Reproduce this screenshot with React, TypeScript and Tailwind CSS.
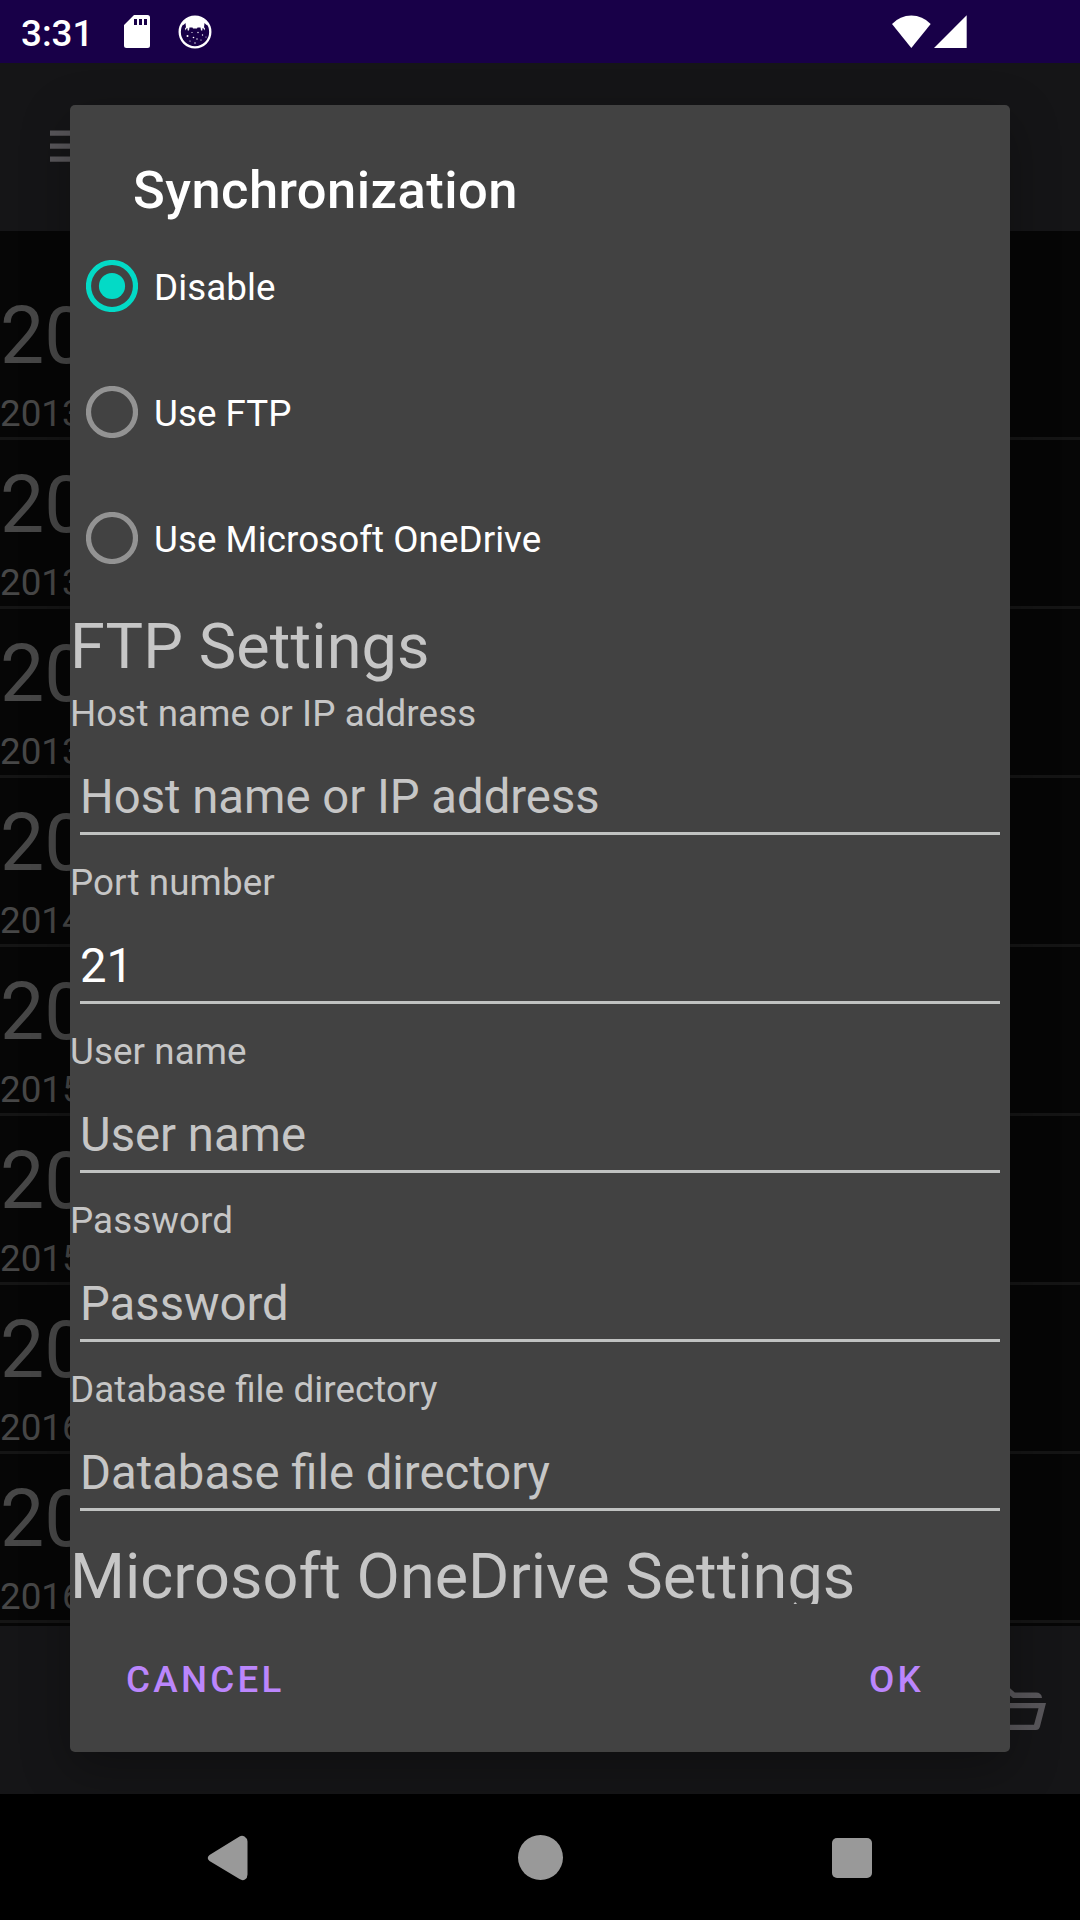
import React from "react";

const entries = ["2013", "2013", "2013", "2014", "2015", "2015", "2016", "2016"];

const fields = [
  { label: "Host name or IP address", value: "" },
  { label: "Port number", value: "21" },
  { label: "User name", value: "" },
  { label: "Password", value: "" },
  { label: "Database file directory", value: "" },
];

function StatusBar() {
  return (
    <div className="flex h-[63px] shrink-0 items-center bg-[#180048] text-white">
      <span className="ml-[21px] w-[103px] pt-[4px] text-[36.75px] leading-[44px] font-medium">3:31</span>
      <svg className="h-[33px] w-[26px]" viewBox="0 0 26 33" fill="white">
        <path
          fillRule="evenodd"
          d="M10 0H23.500Q26 0 26 2.500V30.500Q26 33 23.500 33H2.500Q0 33 0 30.500V10ZM10 4V10H13V4ZM15 4V10H18V4ZM20 4V10H23V4Z"
        />
      </svg>
      <svg className="ml-[28px] h-[34px] w-[34px]" viewBox="0 0 34 34">
        <circle cx="17" cy="17" r="15.300" fill="none" stroke="white" strokeWidth="2.300" />
        <path
          fill="white"
          d="M4 9Q9 1.500 17 1.500T30 9L28.500 10L26.500 8L26 12.500L27 13L26.500 15.500L25.500 13.500L24.500 13L24.300 15.500H23L22.500 12.500H19.500L19 13.500H15L14.500 12.500H11.500L11 15.500H9.700L9.500 13L8.500 13.500L7.500 15.500L7 13L8 12.500L7.500 8L5.500 10Z"
        />
        <g fill="white">
          <circle cx="9.500" cy="21" r="1" />
          <circle cx="14" cy="17.500" r=".6" />
          <circle cx="15.500" cy="22.500" r=".8" />
          <circle cx="20" cy="17.500" r=".7" />
          <circle cx="24.500" cy="20" r=".7" />
          <circle cx="19" cy="24" r=".7" />
          <circle cx="12" cy="26" r=".6" />
          <circle cx="23" cy="25" r=".6" />
          <circle cx="28" cy="22" r=".5" />
          <circle cx="17" cy="28" r=".7" />
        </g>
      </svg>
      <svg className="ml-auto mr-[113px] h-[34px] w-[76px]" viewBox="0 0 76 34" fill="white">
        <path d="M1 9Q9 .5 20.300 .5T39.700 9L20.300 33Z" />
        <path d="M43 33L75.700 .2V33Z" />
      </svg>
    </div>
  );
}

function Background() {
  return (
    <>
      <div className="flex h-[168px] shrink-0 items-start bg-[#151517]">
        <svg className="mt-[67px] ml-[50px] h-[33px] w-[20px]" viewBox="0 0 20 33" fill="#59575b">
          <rect y="0.500" width="20" height="5.250" />
          <rect y="13.500" width="20" height="5.250" />
          <rect y="26.500" width="20" height="5.250" />
        </svg>
      </div>
      <div className="h-[1395px] shrink-0 bg-[#060606] pt-[40px] text-[#474747]">
        {entries.map((year, i) => (
          <div key={i} className="h-[169px] border-b-[3px] border-[#151515]">
            <div className="h-[121px] pt-[19px] text-[78.75px] leading-[92px]">20</div>
            <div className="h-[43px] text-[36.75px] leading-[43px]">{year}</div>
          </div>
        ))}
      </div>
      <div className="flex h-[168px] shrink-0 justify-end bg-[#151517]">
        <svg className="mt-[60px] mr-[34px] h-[45px] w-[58px]" viewBox="0 0 58 45">
          <path
            fill="#59575b"
            fillRule="evenodd"
            d="M0 5Q0 0 5 0H19.500L26.800 6.500H48Q53.500 6.500 54 12H25L17 5.500H5V39L11.500 17H58L52 40.500Q51 44 48 44H5Q0 44 0 39ZM15.500 22.300L10.500 38.700H46L50.500 22.300Z"
          />
        </svg>
      </div>
    </>
  );
}

function NavBar() {
  return (
    <div className="flex h-[126px] shrink-0 items-center bg-black pt-px">
      <svg className="ml-[207px] h-[46px] w-[42px]" viewBox="0 0 42 46">
        <path
          fill="#999"
          d="M2.500 20L32.500 1.500Q35 0 37.500 1.500T40.500 6.500V39.500Q40.500 43 38 44.500T32.500 44L2.500 26Q-1 23 2.500 20Z"
        />
      </svg>
      <div className="ml-[269px] h-[45px] w-[45px] rounded-full bg-[#999]" />
      <div className="ml-[269px] h-[40px] w-[40px] rounded-[5px] bg-[#999]" />
    </div>
  );
}

function RadioRow({ label, checked = false }: { label: string; checked?: boolean }) {
  return (
    <div className="flex h-[126px] items-center pl-[16px]">
      <svg className="h-[52px] w-[52px]" viewBox="0 0 52 52">
        <circle cx="26" cy="26" r="23.500" fill="none" stroke={checked ? "#03dac6" : "#939393"} strokeWidth="5.200" />
        {checked && <circle cx="26" cy="26" r="13.100" fill="#03dac6" />}
      </svg>
      <span className="ml-[16px] pt-[3px] text-[36.75px] leading-[43px] tracking-[0.05px] text-white">{label}</span>
    </div>
  );
}

function Field({ label, value }: { label: string; value: string }) {
  return (
    <div className="h-[169px]">
      <div className="h-[43px] text-[36.75px] leading-[43px] tracking-[0.09px] [font-feature-settings:'liga'_1]">
        {label}
      </div>
      <div className="mx-[10px] h-[100px] border-b-[3px] border-[#c0c2c1] pt-[37px]">
        <div className={value ? "text-[47.25px] leading-[50px] text-white" : "text-[47.25px] leading-[50px]"}>
          {value || label}
        </div>
      </div>
    </div>
  );
}

function SyncDialog() {
  return (
    <div className="absolute top-[105px] left-[70px] flex h-[1647px] w-[940px] flex-col rounded-[5px] bg-[#424242] text-[#c6c6c6] shadow-[0_16px_50px_rgba(0,0,0,0.3)]">
      <h1 className="mt-[52px] h-[66px] shrink-0 pl-[63px] text-[52.5px] leading-[66px] font-medium tracking-[0.0085em] text-white">
        Synchronization
      </h1>
      <div className="h-[1381px] shrink-0 overflow-hidden whitespace-nowrap">
        <RadioRow label="Disable" checked />
        <RadioRow label="Use FTP" />
        <RadioRow label="Use Microsoft OneDrive" />
        <div className="h-[91px] text-[63px] leading-[91px] tracking-[0.1px]">FTP Settings</div>
        {fields.map((f) => (
          <Field key={f.label} label={f.label} value={f.value} />
        ))}
        <div className="text-[63px] leading-[79px]">Microsoft OneDrive Settings</div>
      </div>
      <div className="flex flex-1 justify-between pt-[54px] pr-[86px] pl-[56px] text-[36.75px] leading-[43px] font-medium tracking-[0.0893em] text-[#bb86fc]">
        <button className="h-[43px]">CANCEL</button>
        <button className="h-[43px]">OK</button>
      </div>
    </div>
  );
}

export default function App() {
  return (
    <div className="relative flex h-[1920px] w-[1080px] flex-col overflow-hidden bg-black font-['Roboto',sans-serif]">
      <StatusBar />
      <Background />
      <NavBar />
      <SyncDialog />
    </div>
  );
}
